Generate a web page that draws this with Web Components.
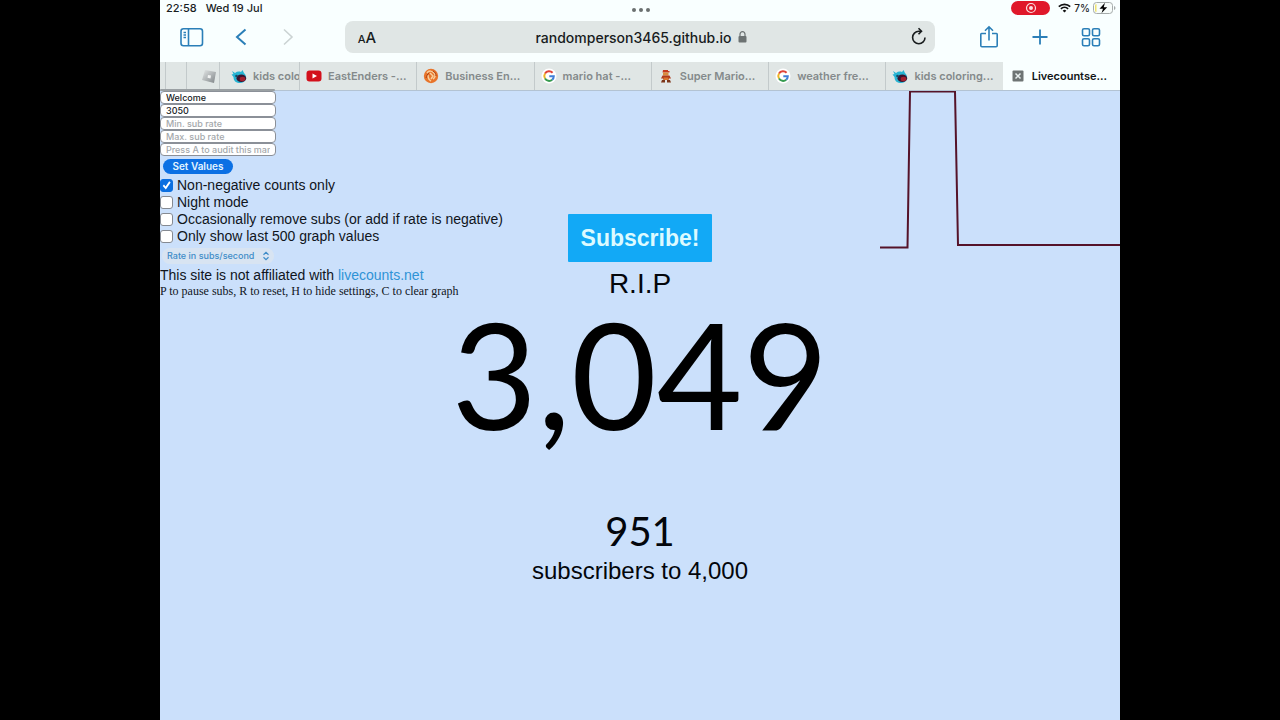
<!DOCTYPE html>
<html lang="en">
<head>
<meta charset="utf-8">
<title>Livecounts</title>
<style>
html, body { margin: 0; background: #000; }
body { min-height: 100vh; display: flex; justify-content: center; font-family: Inter, "Liberation Sans", sans-serif; }
</style>
</head>
<body>
<tablet-screen></tablet-screen>
<script>
const define = (name, html, setup) => {
  const tpl = document.createElement('template');
  tpl.innerHTML = html;
  customElements.define(name, class extends HTMLElement {
    constructor() {
      super();
      this.attachShadow({ mode: 'open' }).append(tpl.content.cloneNode(true));
    }
    connectedCallback() { if (setup) setup(this, this.shadowRoot); }
  });
};

const ICONS = {
  roblox: '<defs><linearGradient id="m" x2="1" y2="1"><stop stop-color="#e4e7e7"/><stop offset="1" stop-color="#7f8588"/></linearGradient></defs><path d="M4 2 15 4 13 15 1 12Z" fill="url(#m)"/><path d="m7 7 3 .6-.5 2.8-3-.6Z" fill="#f2f4f4"/>',
  monster: '<path d="M1 3 4 5C6 3.500 8 3.300 10 4L11.500 2 13 5C15 7 15.500 9 15 11 14 14 11 15.500 8 15 4 14.500 2.500 12 2.500 9L.5 6.500 2.500 6Z" fill="#27b4d3"/><ellipse cx="10.300" cy="10.300" rx="4.800" ry="3.800" fill="#3a1530"/><ellipse cx="11.500" cy="11" rx="2.800" ry="2.200" fill="#a3202f"/><circle cx="5.500" cy="8" r="1.300" fill="#174a66"/>',
  youtube: '<rect x=".5" y="2.500" width="15" height="11" rx="3" fill="#d3101b"/><path d="m6.500 5.500 4.500 2.500-4.500 2.500Z" fill="#fff"/>',
  orange: '<circle cx="8" cy="8" r="7.200" fill="#e8742a"/><path d="M4 5c2-3 5-2 7 0s1 5-1 6M5 7c0 3 1 5 3 6M7 5l3 3-2 3" fill="none" stroke="#f8cf9b" stroke-width="1.500"/><path d="M3 10c1-2 1-4 3-5M10 3c2 1 3 3 3 5" fill="none" stroke="#a93f13"/>',
  google: '<circle cx="8" cy="8" r="7.500" fill="#fff"/><g fill="none" stroke-width="2"><path d="M11.600 4.700A4.800 4.800 0 0 0 4 5.500" stroke="#df4338"/><path d="M4 5.500a4.800 4.800 0 0 0 0 5" stroke="#edb526"/><path d="M4 10.500a4.800 4.800 0 0 0 7.200 1.300" stroke="#369b4f"/><path d="M11.200 11.800A4.800 4.800 0 0 0 12.800 8.300H8.300" stroke="#3f7ed8"/></g>',
  mario: '<path d="M5 2h5v1h1.500v1.500H4.500Z" fill="#c5371d"/><path d="M5 4.500h5.500v3H5Z" fill="#d98b3c"/><path d="M4.500 7.500h7L13 10.500H11v1H5v-1H3Z" fill="#b03a1b"/><path d="M5.500 9.500h5v2.500h-5Z" fill="#d9742f"/><path d="M4 12h3v2.500H3ZM9 12h3l1 2.500H9Z" fill="#7c3418"/>',
  cross: '<rect x="2.500" y="2.500" width="11" height="11" rx="1" fill="#6e7474"/><path d="m5.500 5.500 5 5m0-5-5 5" stroke="#e8efef" stroke-width="1.500"/>'
};

define('status-bar', `
<style>
:host { display: grid; grid-template-columns: 1fr auto 1fr; align-items: center; height: 16px; padding: 0 4px 0 6px; font-size: 11px; font-weight: 500; color: #1a1e1f; }
.left { display: flex; gap: 9px; }
.dots { display: flex; gap: 3px; padding-top: 4px; }
.dots i { width: 4px; height: 4px; border-radius: 50%; background: #6b7070; }
.right { display: flex; justify-content: flex-end; align-items: center; gap: 3px; font-size: 10px; }
.rec { display: grid; place-items: center; width: 39px; height: 14px; border-radius: 7px; background: #e0182a; margin-right: 5px; }
svg { display: block; }
</style>
<div class="left"><span>22:58</span><span>Wed 19 Jul</span></div>
<div class="dots"><i></i><i></i><i></i></div>
<div class="right">
  <span class="rec"><svg width="12" height="12" viewBox="0 0 12 12"><circle cx="6" cy="6" r="4.500" fill="none" stroke="#fbdfe0" stroke-width="1.200"/><circle cx="6" cy="6" r="2" fill="#fbdfe0"/></svg></span>
  <svg width="13" height="10" viewBox="0 0 13 10" fill="none" stroke="#111" stroke-width="1.700"><path d="M.8 3.600a8.200 8.200 0 0 1 11.400 0M2.900 5.900a5.200 5.200 0 0 1 7.200 0"/><path d="M6.500 9.500 4.700 7.700a2.600 2.600 0 0 1 3.600 0Z" fill="#111" stroke="none"/></svg>
  <span>7%</span>
  <svg width="23" height="12" viewBox="0 0 23 12"><rect x=".5" y=".5" width="19" height="11" rx="3" fill="#f8fdfb" stroke="#a5abaa"/><path d="M2 3.500Q2 2 3.500 2v8Q2 10 2 8.500Z" fill="#efe36f"/><path d="M21 4v4q1.500-.5 1.500-2T21 4Z" fill="#a5abaa"/><path d="M12 .8 6.500 6.800H10L8.500 11.200 14.200 5.200H10.700Z" fill="#000"/></svg>
</div>`);

define('browser-toolbar', `
<style>
:host { display: grid; grid-template-columns: 185px 1fr 185px; align-items: center; height: 42px; }
nav { display: flex; gap: 24px; padding-left: 20px; }
nav.end { gap: 27px; justify-content: flex-end; padding: 0 17px 0 0; }
button { border: 0; background: none; padding: 0; width: 24px; height: 24px; color: #2b7fb8; }
svg { display: block; fill: none; stroke: currentColor; }
.address { display: grid; grid-template-columns: 32px 1fr 32px; align-items: center; height: 32px; padding: 0 0 0 2px; border-radius: 8px; background: #e0e6e5; color: #181c1d; }
.address button { color: #181c1d; justify-self: center; }
.address .size { justify-self: end; font: 500 15px Inter, sans-serif; }
.size small { font-size: 11px; }
.url { display: flex; justify-content: center; align-items: center; gap: 6px; font-size: 14px; font-weight: 500; }
</style>
<nav>
  <button aria-label="Sidebar"><svg width="24" height="24" viewBox="0 0 24 24" stroke-width="1.600"><rect x="1" y="3.800" width="21.500" height="17" rx="2.500"/><path d="M8.500 4v17M3.500 7.500h2.500M3.500 10h2.500M3.500 12.500h2.500"/></svg></button>
  <button aria-label="Back"><svg width="24" height="24" viewBox="0 0 24 24" stroke-width="2"><path d="M17.500 4.500 9 12l8.500 7.500"/></svg></button>
  <button aria-label="Forward"><svg width="24" height="24" viewBox="0 0 24 24" stroke-width="1.600" style="stroke:#cbd3d3"><path d="M8 4.500 16 12l-8 7.500"/></svg></button>
</nav>
<div class="address">
  <button class="size" aria-label="Text size"><small>A</small>A</button>
  <div class="url"><span>randomperson3465.github.io</span><svg width="9" height="12" viewBox="0 0 9 12"><rect x=".5" y="5" width="8" height="6.500" rx="1" fill="#6c7272" stroke="none"/><path d="M2 5.500V3.200a2.500 2.500 0 0 1 5 0V5.500" stroke="#6c7272" stroke-width="1.200"/></svg></div>
  <button aria-label="Reload"><svg width="24" height="24" viewBox="0 0 24 24" stroke-width="1.600"><path d="M18 12.500a6.200 6.200 0 1 1-6.200-6.200H14"/><path d="m11.500 3.300 3 3-3 3"/></svg></button>
</div>
<nav class="end">
  <button aria-label="Share"><svg width="24" height="24" viewBox="0 0 24 24" stroke-width="1.600"><path d="M9 8.500H4.500Q3.800 8.500 3.800 9.500V20.500Q3.800 21.800 5 21.800H19Q20.200 21.800 20.200 20.500V9.500Q20.200 8.500 19.500 8.500H15M12 15.500V2M8 5.800 12 1.800l4 4"/></svg></button>
  <button aria-label="New tab"><svg width="24" height="24" viewBox="0 0 24 24" stroke-width="1.800"><path d="M12 4.500v15M4.500 12h15"/></svg></button>
  <button aria-label="All tabs"><svg width="24" height="24" viewBox="0 0 24 24" stroke-width="1.600"><rect x="3.500" y="3.800" width="7" height="7" rx="1.500"/><rect x="13.500" y="3.800" width="7" height="7" rx="1.500"/><rect x="3.500" y="13.800" width="7" height="7" rx="1.500"/><rect x="13.500" y="13.800" width="7" height="7" rx="1.500"/></svg></button>
</nav>`);

define('browser-tab', `
<style>
:host { display: flex; flex: 1 1 0; min-width: 0; box-sizing: border-box; border-left: 1px solid #c3cacb; background: #e0e6e5; color: #848a8b; }
:host([active]) { background: #f9ffff; color: #111516; border-color: #f9ffff; }
button { all: unset; box-sizing: border-box; display: flex; align-items: center; gap: 6px; width: 100%; padding-left: var(--pad, 6px); font: 600 11px Inter, sans-serif; color: inherit; white-space: nowrap; overflow: hidden; }
svg { flex: none; display: block; }
</style>
<button role="tab"><svg width="16" height="16" viewBox="0 0 16 16"></svg><slot></slot></button>`,
(host, root) => {
  const svg = root.querySelector('svg');
  const icon = ICONS[host.getAttribute('icon')];
  if (icon) svg.innerHTML = icon; else svg.remove();
});

define('tab-strip', `
<style>
:host { display: flex; position: relative; box-sizing: border-box; height: 29px; border-bottom: 1px solid #b3c3d3; }
/* scroll indicator lying over the bottom edge */
:host::after { content: ""; position: absolute; left: 0; bottom: -1px; width: 12%; height: 2px; border-radius: 1px; background: #9aa0a3; }
.sliver { flex: 0 0 5px; border: 0; }
.narrow { flex: 0 0 21px; }
.short { flex: 0 0 33px; --pad: 14px; }
.part { flex: 0 0 80px; --pad: 11px; }
</style>
<browser-tab class="sliver"></browser-tab>
<browser-tab class="narrow"></browser-tab>
<browser-tab class="short" icon="roblox"></browser-tab>
<browser-tab class="part" icon="monster">kids colo</browser-tab>
<browser-tab icon="youtube">EastEnders -...</browser-tab>
<browser-tab icon="orange">Business En...</browser-tab>
<browser-tab icon="google">mario hat -...</browser-tab>
<browser-tab icon="mario">Super Mario...</browser-tab>
<browser-tab icon="google">weather fre...</browser-tab>
<browser-tab icon="monster">kids coloring...</browser-tab>
<browser-tab icon="cross" active>Livecountse...</browser-tab>`);

define('check-option', `
<style>
:host { display: block; }
label { display: flex; align-items: center; gap: 4px; font: 14px/17px "Liberation Sans", sans-serif; color: #10151c; white-space: nowrap; }
input { appearance: none; box-sizing: border-box; width: 13px; height: 13px; margin: 0; border: 1px solid #858a92; border-radius: 3px; background: #fff; display: grid; place-items: center; }
input:checked { background: #0b6fe0; border-color: #0b6fe0; }
input:checked::before { content: ""; width: 9px; height: 9px; background: #fff; clip-path: polygon(8% 55%, 22% 40%, 40% 62%, 80% 4%, 96% 16%, 43% 94%); }
</style>
<label><input type="checkbox"><slot></slot></label>`,
(host, root) => { root.querySelector('input').checked = host.hasAttribute('checked'); });

define('count-settings', `
<style>
:host { display: flex; flex-direction: column; align-items: flex-start; color: #10151c; }
.field { box-sizing: border-box; width: 116px; height: 13px; padding: 0 5px; border: 1px solid #8b9098; border-radius: 4px; background: #fff; font: 500 9px/11px Inter, sans-serif; color: #15191d; outline: 0; }
.field::placeholder { color: #a4a8ab; opacity: 1; }
.set { margin: 3px; width: 70px; height: 15px; padding: 0; border: 0; border-radius: 8px; background: #0b70e4; color: #e3f4ff; font: 600 10px/15px Inter, sans-serif; }
.options { display: flex; flex-direction: column; }
.rate { position: relative; display: flex; align-items: center; margin: 3px 2px; }
select { appearance: none; width: 112px; height: 16px; padding: 0 5px; border: 0; border-radius: 8px; background: #d8e4f2; color: #3f8cc8; font: 500 9px/16px Inter, sans-serif; }
.rate svg { position: absolute; right: 4px; fill: none; stroke: #3f8cc8; pointer-events: none; }
p { margin: 0; font: 14px/17px "Liberation Sans", sans-serif; white-space: nowrap; }
p.keys { font: 12px/15px "Liberation Serif", serif; }
a { color: #2f93d6; text-decoration: none; }
</style>
<input class="field" value="Welcome" aria-label="Title">
<input class="field" value="3050" aria-label="Count">
<input class="field" placeholder="Min. sub rate" aria-label="Min. sub rate">
<input class="field" placeholder="Max. sub rate" aria-label="Max. sub rate">
<input class="field" placeholder="Press A to audit this many" aria-label="Audit">
<button class="set">Set Values</button>
<div class="options">
  <check-option checked>Non-negative counts only</check-option>
  <check-option>Night mode</check-option>
  <check-option>Occasionally remove subs (or add if rate is negative)</check-option>
  <check-option>Only show last 500 graph values</check-option>
</div>
<div class="rate"><select aria-label="Rate"><option>Rate in subs/second</option></select><svg width="8" height="10" viewBox="0 0 8 10" stroke-width="1.200"><path d="m1.500 3.700 2.500-2.400 2.500 2.400M1.500 6.300 4 8.700l2.500-2.400"/></svg></div>
<p>This site is not affiliated with <a href="#">livecounts.net</a></p>
<p class="keys">P to pause subs, R to reset, H to hide settings, C to clear graph</p>`);

define('live-counter', `
<style>
:host { display: flex; flex-direction: column; align-items: center; font-family: "Liberation Sans", sans-serif; color: #03060b; }
.subscribe { width: 144px; height: 48px; padding: 0; border: 0; border-radius: 1px; background: #12a9f6; color: #dcfaff; font: bold 23px/48px "Liberation Sans", sans-serif; }
.name { font-size: 28px; line-height: 44px; }
.count { font: 148px/134px Lato, sans-serif; color: #000; }
.left { font: 40px/48px Lato, sans-serif; margin-top: 67px; }
.goal { font-size: 24px; line-height: 32px; }
</style>
<button class="subscribe">Subscribe!</button>
<div class="name">R.I.P</div>
<div class="count">3,049</div>
<div class="left">951</div>
<div class="goal">subscribers to 4,000</div>`);

define('rate-graph', `
<style>
:host { display: block; width: 25%; }
svg { display: block; width: 100%; fill: none; stroke: #551329; stroke-width: 2; }
</style>
<svg viewBox="0 0 240 160"><path d="M0 156.500H27.500L30 .5H75L78 154H240"/></svg>`);

define('count-page', `
<style>
:host { display: grid; grid-template: auto / 100%; align-content: start; background: #cbe0fb; }
rate-graph, live-counter, count-settings { grid-area: 1 / 1; }
count-settings { justify-self: start; }
rate-graph { justify-self: end; align-self: start; }
live-counter { justify-self: center; padding: 123px 0 24px; }
</style>
<rate-graph></rate-graph>
<live-counter></live-counter>
<count-settings></count-settings>`);

define('tablet-screen', `
<style>
:host { display: flex; flex-direction: column; width: 75%; min-height: 100vh; background: #f9ffff; }
tab-strip { margin-top: 4px; }
count-page { flex: 1; }
</style>
<status-bar></status-bar>
<browser-toolbar></browser-toolbar>
<tab-strip></tab-strip>
<count-page></count-page>`);
</script>
</body>
</html>
